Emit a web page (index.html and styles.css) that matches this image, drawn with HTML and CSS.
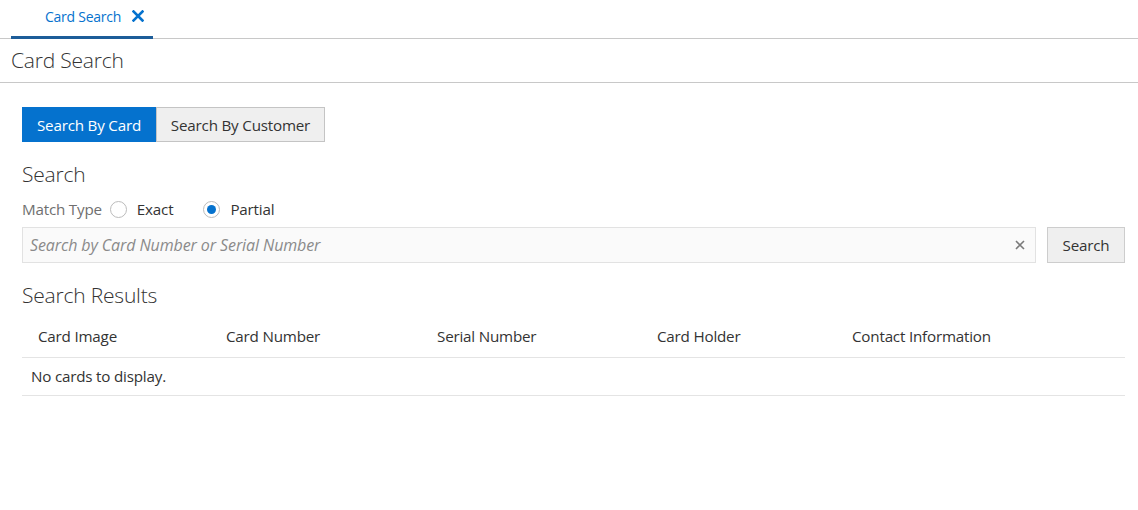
FILE: index.html
```html
<!DOCTYPE html>
<html lang="en">
<head>
  <meta charset="UTF-8">
  <title>Card Search</title>
  <link rel="stylesheet" href="styles.css">
</head>
<body>
  <div class="tab-bar">
    <div class="tab active">
      <span class="tab-label">Card Search</span>
      <svg class="tab-close" width="12" height="12" viewBox="0 0 12 12">
        <path d="M1.5 1.5 L10.5 10.5 M10.5 1.5 L1.5 10.5" stroke="#0572ce" stroke-width="2.6" stroke-linecap="square"/>
      </svg>
    </div>
  </div>
  <div class="page-title">Card Search</div>
  <div class="content">
    <div class="btn-group">
      <button class="seg-btn selected">Search By Card</button>
      <button class="seg-btn">Search By Customer</button>
    </div>
    <h2 class="section-title">Search</h2>
    <div class="match-row">
      <span class="match-label">Match Type</span>
      <label class="radio"><span class="radio-dot"></span>Exact</label>
      <label class="radio"><span class="radio-dot checked"></span>Partial</label>
    </div>
    <div class="search-row">
      <div class="search-box">
        <input type="text" placeholder="Search by Card Number or Serial Number">
        <svg class="clear" width="10" height="10" viewBox="0 0 10 10">
          <path d="M1 1 L9 9 M9 1 L1 9" stroke="#7a7a7a" stroke-width="1.6"/>
        </svg>
      </div>
      <button class="search-btn">Search</button>
    </div>
    <h2 class="section-title results-title">Search Results</h2>
    <div class="results">
      <div class="results-head">
        <div class="col">Card Image</div>
        <div class="col">Card Number</div>
        <div class="col">Serial Number</div>
        <div class="col">Card Holder</div>
        <div class="col">Contact Information</div>
      </div>
      <div class="results-empty">No cards to display.</div>
    </div>
  </div>
</body>
</html>
```

FILE: styles.css
```css
:root {
  --blue: #0572ce;
  --dark-blue: #1d5d99;
  --text: #333;
  --muted: #6f6f6f;
  --line: #e4e4e4;
}
body {
  margin: 0;
  font-family: "Open Sans", "Noto Sans", Arial, sans-serif;
  color: var(--text);
  background: #fff;
}
/* Top tab strip */
.tab-bar {
  height: 38px;
  border-bottom: 1px solid #c8c8c8;
  display: flex;
  padding-left: 11px;
}
.tab {
  width: 142px;
  box-sizing: border-box;
  display: flex;
  align-items: center;
  padding: 0 0 4px 34px;
  border-bottom: 3px solid var(--dark-blue);
  margin-bottom: -1px;
}
.tab-label {
  font-size: 14px;
  color: var(--blue);
  letter-spacing: -0.25px;
}
.tab-close {
  margin-left: 11px;
}
.page-title {
  height: 43px;
  line-height: 43px;
  padding-left: 11px;
  font-size: 21px;
  font-weight: 300;
  border-bottom: 1px solid #c8c8c8;
  letter-spacing: -0.2px;
}
.content {
  padding: 24px 13px 0 22px;
}
.btn-group {
  display: flex;
}
.seg-btn {
  font-family: inherit;
  height: 35px;
  font-size: 15.2px;
  border: 1px solid #c4c4c4;
  background: #efefef;
  color: var(--text);
  padding: 0;
  letter-spacing: -0.2px;
  margin: 0;
}
.seg-btn.selected {
  background: var(--blue);
  border-color: var(--blue);
  color: #fff;
  width: 134px;
}
.seg-btn + .seg-btn {
  width: 169px;
}
.section-title {
  font-size: 21px;
  font-weight: 300;
  margin: 18px 0 0 0;
  line-height: 28px;
  letter-spacing: -0.2px;
}
.match-row {
  display: flex;
  align-items: center;
  height: 26px;
  margin-top: 8px;
  font-size: 15.2px;
  letter-spacing: -0.2px;
}
.match-label {
  color: var(--muted);
  margin-right: 8px;
}
.radio {
  display: flex;
  align-items: center;
  margin-right: 30px;
}
.radio-dot {
  width: 15px;
  height: 15px;
  border: 1px solid #bcbcbc;
  border-radius: 50%;
  margin-right: 10px;
  position: relative;
  background: #fff;
}
.radio-dot.checked::after {
  content: "";
  position: absolute;
  left: 3px;
  top: 3px;
  width: 9px;
  height: 9px;
  border-radius: 50%;
  background: var(--blue);
}
.search-row {
  display: flex;
  margin-top: 5px;
}
.search-box {
  flex: 1;
  height: 36px;
  box-sizing: border-box;
  border: 1px solid #e2e2e2;
  background: #fafafa;
  display: flex;
  align-items: center;
  padding: 0 10px 0 7px;
}
.search-box input {
  flex: 1;
  border: none;
  background: transparent;
  font-family: inherit;
  font-size: 16px;
  outline: none;
  padding: 0;
  letter-spacing: -0.1px;
}
.search-box input::placeholder {
  font-style: italic;
  color: #8a8a8a;
}
.search-btn {
  margin-left: 11px;
  width: 78px;
  height: 36px;
  font-family: inherit;
  font-size: 15.2px;
  border: 1px solid #cdcdcd;
  background: #efefef;
  color: var(--text);
  letter-spacing: -0.2px;
}
.results-title {
  margin-top: 18px;
}
.results {
  margin-top: 6px;
  font-size: 15.2px;
  letter-spacing: -0.2px;
}
.results-head {
  display: grid;
  grid-template-columns: 188px 211px 220px 195px 1fr;
  height: 42px;
  align-items: center;
  padding-left: 16px;
  border-bottom: 1px solid var(--line);
}
.results-empty {
  height: 37px;
  line-height: 37px;
  padding-left: 9px;
  border-bottom: 1px solid var(--line);
}
```
